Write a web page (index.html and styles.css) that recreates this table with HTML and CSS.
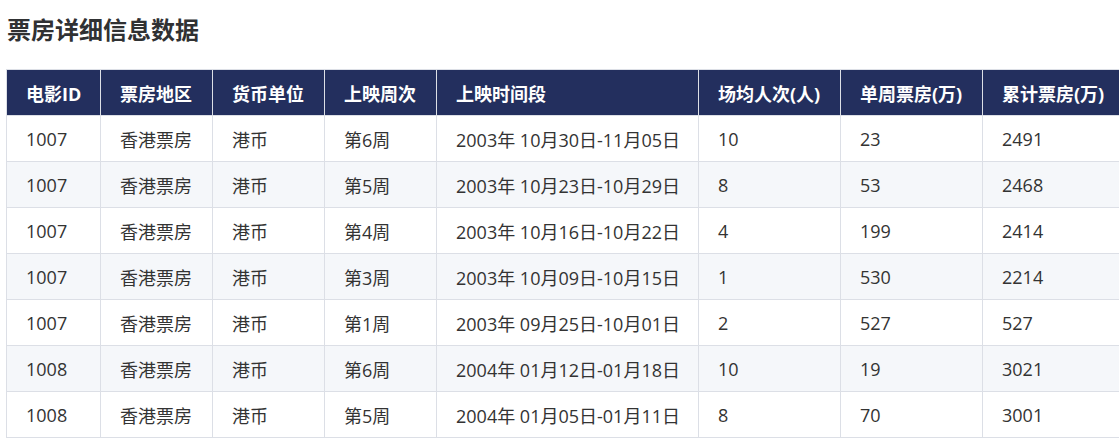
FILE: index.html
```html
<!DOCTYPE html>
<html lang="zh-CN">
<head>
<meta charset="utf-8">
<title>票房详细信息数据</title>
<link rel="stylesheet" href="styles.css">
</head>
<body>
<h2 class="title">票房详细信息数据</h2>
<table class="data">
  <colgroup>
    <col class="c-id"><col class="c-mid"><col class="c-mid"><col class="c-mid"><col class="c-wide"><col class="c-num"><col class="c-num"><col class="c-num">
  </colgroup>
  <thead>
    <tr><th>电影ID</th><th>票房地区</th><th>货币单位</th><th>上映周次</th><th>上映时间段</th><th>场均人次(人)</th><th>单周票房(万)</th><th>累计票房(万)</th></tr>
  </thead>
  <tbody>
    <tr><td>1007</td><td>香港票房</td><td>港币</td><td>第6周</td><td>2003年 10月30日-11月05日</td><td>10</td><td>23</td><td>2491</td></tr>
    <tr><td>1007</td><td>香港票房</td><td>港币</td><td>第5周</td><td>2003年 10月23日-10月29日</td><td>8</td><td>53</td><td>2468</td></tr>
    <tr><td>1007</td><td>香港票房</td><td>港币</td><td>第4周</td><td>2003年 10月16日-10月22日</td><td>4</td><td>199</td><td>2414</td></tr>
    <tr><td>1007</td><td>香港票房</td><td>港币</td><td>第3周</td><td>2003年 10月09日-10月15日</td><td>1</td><td>530</td><td>2214</td></tr>
    <tr><td>1007</td><td>香港票房</td><td>港币</td><td>第1周</td><td>2003年 09月25日-10月01日</td><td>2</td><td>527</td><td>527</td></tr>
    <tr><td>1008</td><td>香港票房</td><td>港币</td><td>第6周</td><td>2004年 01月12日-01月18日</td><td>10</td><td>19</td><td>3021</td></tr>
    <tr><td>1008</td><td>香港票房</td><td>港币</td><td>第5周</td><td>2004年 01月05日-01月11日</td><td>8</td><td>70</td><td>3001</td></tr>
  </tbody>
</table>
</body>
</html>
```
FILE: styles.css
```css
html {
  overflow: hidden;
}
body {
  margin: 0;
  padding: 13px 0 0 6px;
  font-family: "Open Sans", "Noto Sans CJK SC", sans-serif;
  color: #333;
  background: #fff;
}
.title {
  margin: 0 0 24px 1px;
  font-size: 24px;
  line-height: 32px;
  font-weight: 700;
  font-family: "Noto Sans CJK SC", sans-serif;
  color: #303133;
}
.data {
  border-collapse: collapse;
  table-layout: fixed;
  width: 1119px;
  font-size: 18px;
}
.c-id { width: 94px; }
.c-mid { width: 112px; }
.c-wide { width: 262px; }
.c-num { width: 142px; }
.data th,
.data td {
  border: 1px solid #dcdfe6;
  height: 46px;
  padding: 0 0 0 19px;
  text-align: left;
  white-space: nowrap;
  box-sizing: border-box;
}
.data th {
  background: #232f5e;
  color: #fff;
  font-weight: 700;
}
.data td {
  color: #333;
}
.data tbody tr:nth-child(even) td {
  background: #f5f7fa;
}
```
